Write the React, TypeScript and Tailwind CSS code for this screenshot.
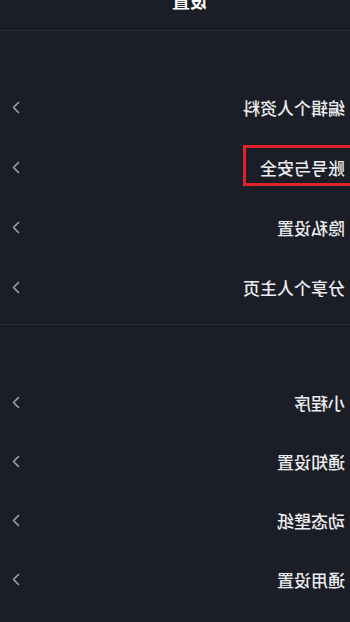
import React from "react";

const Chevron = () => (
  <svg width="8" height="13" viewBox="0 0 8 13" fill="none" className="shrink-0">
    <path d="M1.5 1.5 L6.5 6.5 L1.5 11.5" stroke="#9a9ba4" strokeWidth="1.7" strokeLinecap="round" strokeLinejoin="round" />
  </svg>
);

const Row = ({ label, h, boxed }: { label: string; h: string; boxed?: boolean }) => (
  <div className={`relative flex items-center justify-between pl-[5px] pr-[12px] ${h}`}>
    <span className="text-[17px] leading-none font-medium text-[#ececee]">{label}</span>
    <Chevron />
    {boxed && (
      <div className="absolute left-[-10px] top-[8px] w-[117px] h-[41px] border-[3px] border-[#e1222b]" />
    )}
  </div>
);

export default function App() {
  return (
    <div
      className="w-[350px] h-[622px] overflow-hidden bg-[#1b1d27] [transform:scaleX(-1)]"
      style={{ fontFamily: '"Noto Sans CJK SC", "Noto Sans", sans-serif' }}
    >
      <div className="h-[30px] overflow-hidden flex justify-center pr-[30px]">
        <div className="-mt-[9px] text-[18px] leading-[18px] font-bold text-white">设置</div>
      </div>
      <div className="h-px bg-[#2b2e3a]" />
      <div className="pt-[46px]">
        <Row label="编辑个人资料" h="h-[60px]" />
        <Row label="账号与安全" h="h-[60px]" boxed />
        <Row label="隐私设置" h="h-[60px]" />
        <Row label="分享个人主页" h="h-[60px]" />
      </div>
      <div className="mt-[7px] h-px bg-[#282b36]" />
      <div className="pt-[48px]">
        <Row label="小程序" h="h-[59px]" />
        <Row label="通知设置" h="h-[59px]" />
        <Row label="动态壁纸" h="h-[59px]" />
        <Row label="通用设置" h="h-[59px]" />
      </div>
    </div>
  );
}
